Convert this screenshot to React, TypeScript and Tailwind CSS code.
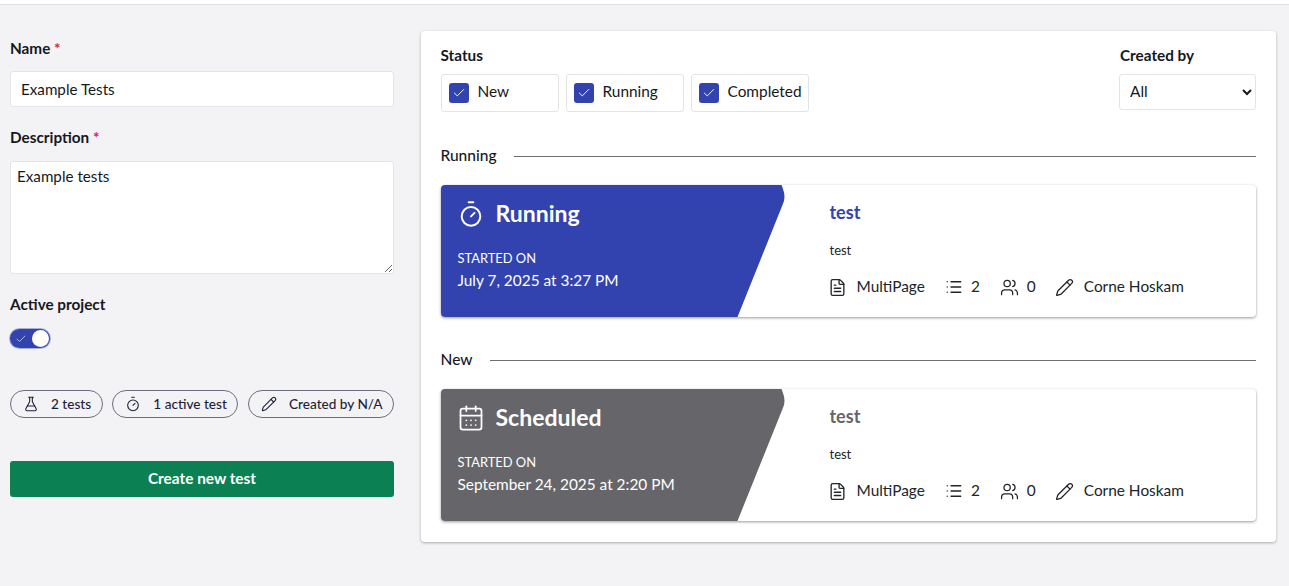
import React from "react";
import { Check, Timer, FlaskConical, Pencil, CalendarDays, FileText, List, Users } from "lucide-react";

interface TestCardProps {
  title: string;
  date: string;
  titleColor: string;
  panelColor: string;
  icon: React.ReactNode;
}

const TestCard: React.FC<TestCardProps> = ({ title, date, titleColor, panelColor, icon }) => {
  return (
    <div className="flex h-[132px] overflow-hidden rounded-[4px] bg-white shadow-[0_1px_3px_rgba(0,0,0,0.4)]">
      <div
        className={`h-full w-[344px] shrink-0 pl-[17px] pt-[13px] text-white [clip-path:path('M0_0H341Q344_7_344_12Q344_16_342_20L297_132H0Z')] ${panelColor}`}
      >
        <div className="flex h-[30px] items-center">
          <span className="-ml-px mt-[2px] w-[39px] shrink-0">{icon}</span>
          <span className="text-[23px] leading-[30px] font-bold">{title}</span>
        </div>
        <div className="mt-[21px] text-[12.9px] leading-[18px]">STARTED ON</div>
        <div className="mt-[3px] text-[15.4px] leading-[20px]">{date}</div>
      </div>
      <div className="flex-1 pl-[45px] pt-[16px] text-[#212529]">
        <div className={`text-[18px] leading-[22px] font-bold ${titleColor}`}>test</div>
        <div className="mt-[19px] text-[13px] leading-[16px]">test</div>
        <div className="mt-[18px] flex h-[22px] items-center text-[15.4px]">
          <FileText size={19} strokeWidth={1.7} className="-ml-[2px] shrink-0" />
          <span className="ml-[10px]">MultiPage</span>
          <List size={18} strokeWidth={1.7} className="ml-[20px] shrink-0" />
          <span className="ml-[8px]">2</span>
          <Users size={19} strokeWidth={1.6} className="ml-[20px] shrink-0" />
          <span className="ml-[8px]">0</span>
          <Pencil size={19} strokeWidth={1.6} className="ml-[19px] shrink-0" />
          <span className="ml-[10px]">Corne Hoskam</span>
        </div>
      </div>
    </div>
  );
};

const StatusBox: React.FC<{ label: string }> = ({ label }) => (
  <label className="flex h-[38px] w-[118.5px] items-center gap-[9px] rounded-[3px] border border-[#e3e4e8] pl-[7px]">
    <span className="flex h-[20px] w-[20px] shrink-0 items-center justify-center rounded-[3px] bg-[#3243b0]">
      <Check size={14} strokeWidth={1.6} className="text-white" />
    </span>
    <span className="pb-[3px] text-[15.4px]">{label}</span>
  </label>
);

const Pill: React.FC<{ icon: React.ReactNode; label: string }> = ({ icon, label }) => (
  <div className="flex h-[28px] items-center gap-[12px] rounded-full border border-[#6b6e80] pl-[12px] pr-[10.5px] text-[13.6px] text-[#1c1f3a]">
    {icon}
    <span className="font-medium">{label}</span>
  </div>
);

const SectionTitle: React.FC<{ label: string }> = ({ label }) => (
  <div className="flex h-[22px] items-center gap-[17px]">
    <span className="mb-[2px] text-[15.5px] leading-[20px] font-medium">{label}</span>
    <div className="h-px flex-1 bg-[#6f6f6f]" />
  </div>
);

export default function App() {
  return (
    <div className="h-[586px] w-full overflow-hidden bg-[#f3f3f6] font-['Lato',sans-serif] text-[#16181d]">
      <div className="h-[5px] border-b border-[#dfdfe2] bg-white" />
      <div className="flex gap-[27px] pl-[10px] pt-[26px]">
        <div className="w-[384px] shrink-0">
          <div className="mt-[7px] text-[15.3px] leading-[20px] font-bold">
            Name <span className="text-[#d81b60]">*</span>
          </div>
          <input
            defaultValue="Example Tests"
            className="mt-[13px] block h-[36px] w-full rounded-[3px] border border-[#e3e4e8] bg-white px-[10px] pb-[1px] text-[15.2px] outline-none"
          />
          <div className="mt-[20px] text-[15.3px] leading-[20px] font-bold">
            Description <span className="text-[#d81b60]">*</span>
          </div>
          <textarea
            defaultValue="Example tests"
            className="mt-[14px] block h-[113px] w-full rounded-[3px] border border-[#e3e4e8] bg-white px-[6px] py-[4px] text-[15.2px] leading-[20px] outline-none"
          />
          <div className="mt-[20px] text-[15.3px] leading-[20px] font-bold">Active project</div>
          <div className="mt-[15px] flex h-[19px] w-[40px] items-center justify-between rounded-full bg-[#3243b0] pl-[5px] pr-[1px] shadow-[0_0_0_1px_#a9aed6]">
            <Check size={12} strokeWidth={1.5} className="text-[#d5d8f2]" />
            <span className="h-[17px] w-[17px] rounded-full bg-white" />
          </div>
          <div className="mt-[42px] flex justify-between">
            <Pill icon={<FlaskConical size={16} strokeWidth={1.6} />} label="2 tests" />
            <Pill icon={<Timer size={16} strokeWidth={1.6} />} label="1 active test" />
            <Pill icon={<Pencil size={16} strokeWidth={1.6} />} label="Created by N/A" />
          </div>
          <button className="mt-[43px] h-[36px] w-full rounded-[3px] bg-[#0b8052] text-[15.4px] font-bold text-white">
            Create new test
          </button>
        </div>

        <div className="h-[511px] w-[855px] shrink-0 rounded-[4px] bg-white pl-[19.5px] pr-[20px] pt-[14px] shadow-[0_1px_3px_rgba(0,0,0,0.3)]">
          <div className="flex justify-between">
            <div>
              <div className="text-[15.3px] leading-[20px] font-bold">Status</div>
              <div className="mt-[9px] flex gap-[6.5px]">
                <StatusBox label="New" />
                <StatusBox label="Running" />
                <StatusBox label="Completed" />
              </div>
            </div>
            <div className="w-[137px]">
              <div className="pl-[1px] text-[15.3px] leading-[20px] font-bold">Created by</div>
              <select className="mt-[9px] h-[36px] w-full rounded-[3px] border border-[#e3e4e8] bg-white px-[6px] pb-[3px] text-[15.4px] outline-none">
                <option>All</option>
              </select>
            </div>
          </div>
          <div className="mt-[33px]">
            <SectionTitle label="Running" />
          </div>
          <div className="mt-[18px]">
            <TestCard
              title="Running"
              date="July 7, 2025 at 3:27 PM"
              titleColor="text-[#3243b0]"
              panelColor="bg-[#3243b0]"
              icon={<Timer size={28} strokeWidth={1.7} />}
            />
          </div>
          <div className="mt-[32px]">
            <SectionTitle label="New" />
          </div>
          <div className="mt-[18px]">
            <TestCard
              title="Scheduled"
              date="September 24, 2025 at 2:20 PM"
              titleColor="text-[#66666a]"
              panelColor="bg-[#66666a]"
              icon={<CalendarDays size={28} strokeWidth={1.5} />}
            />
          </div>
        </div>
      </div>
    </div>
  );
}
